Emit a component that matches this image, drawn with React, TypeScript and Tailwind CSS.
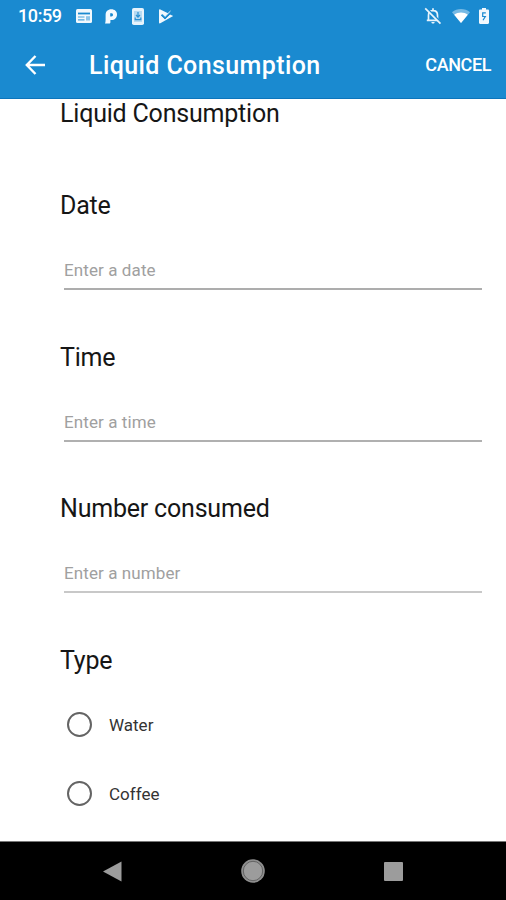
import React from "react";

function NewsIcon() {
  return (
    <svg width="16" height="14" viewBox="0 0 16 14">
      <rect width="16" height="14" rx="1.5" fill="#f1f8fd" />
      <path d="M2 4.500h12" stroke="#1a8ad0" strokeWidth="1.8" />
      <path d="M2 8h6.500M2 10.800h6.500" stroke="#4ba4db" strokeWidth="1.2" />
      <rect x="10" y="7.2" width="4" height="4.3" fill="#8cc4e8" />
    </svg>
  );
}

function PandoraIcon() {
  return (
    <svg width="12" height="15" viewBox="0 0 12 15">
      <path
        fill="#f4faff"
        fillRule="evenodd"
        d="M.6 6C.6 2.500 2.900.3 6.300.3 9.800.3 12 2.500 12 5.500c0 3.300-2.400 5.600-5.500 5.600H5.400v2.100c0 .8-.5 1.300-1.300 1.300H0c.4-1 .6-2 .6-3.500zM5.200 4.200v3.200h1.200c1 0 1.600-.6 1.600-1.600s-.6-1.600-1.600-1.600z"
      />
    </svg>
  );
}

function PhoneDownloadIcon() {
  return (
    <svg width="12" height="17" viewBox="0 0 12 17">
      <rect width="12" height="17" rx="1.8" fill="#e6f3fc" />
      <rect x="2" y="3" width="8" height="11" fill="#b5daf2" />
      <path d="M6 4v5M4 7l2 2.200L8 7M3.200 9.500v2.200h5.600V9.500" fill="none" stroke="#2b91d3" strokeWidth="1.200" />
    </svg>
  );
}

function PlayCheckIcon() {
  return (
    <svg width="15" height="15" viewBox="0 0 15 15">
      <path d="M0 1.200C0 .4.600 0 1.300.4L9.500 4.600 6 8 3.200 5.200 2 6.400 6 10.300 12 4.400 11 5.400 14.200 7 1.300 14.300C.600 14.700 0 14.300 0 13.500z" fill="#f1f8fd" />
      <path d="m2.600 5.800 3.400 3.300 6.200-6.200" fill="none" stroke="#1a8ad0" strokeWidth="1.500" />
      <path d="m4.200 5.200 2 2L11.500 2" fill="none" stroke="#d9edfa" strokeWidth="1" />
    </svg>
  );
}

function BellOffIcon() {
  return (
    <svg width="18" height="18" viewBox="0 0 18 18" fill="none" stroke="#e8f4fc" strokeWidth="1.700">
      <path d="M4.500 13V8.200C4.500 5.500 6.200 3.700 9 3.700s4.500 1.800 4.500 4.500V13M2.800 13.300h12.400M9 1.200v2.500" />
      <path d="M7.400 15h3.200c0 1-.6 1.600-1.600 1.600S7.400 16 7.400 15z" fill="#e8f4fc" stroke="none" />
      <path d="M2.500.800 17.500 15.800" stroke="#1a8ad0" />
      <path d="m1.200 1.300 15.300 15.300" />
    </svg>
  );
}

function WifiIcon() {
  return (
    <svg width="18" height="14" viewBox="0 0 18 14">
      <path d="M0 3.200C5-1 13-1 18 3.200L9 14z" fill="#76b9e4" />
      <path d="M2.200 5.800C6 2.700 12 2.700 15.800 5.800L9 14z" fill="#fff" />
    </svg>
  );
}

function BatteryIcon() {
  return (
    <svg width="10" height="16" viewBox="0 0 10 16">
      <path d="M3 0h4v1.600h1.800c.7 0 1.200.5 1.200 1.200v12c0 .7-.5 1.200-1.200 1.200H1.200C.5 16 0 15.500 0 14.800v-12c0-.7.5-1.200 1.200-1.200H3z" fill="#f1f8fd" />
      <path d="M6.800 4.800H3.700v3.700h2.600L4 12.200" fill="none" stroke="#1a8ad0" strokeWidth="1.200" />
    </svg>
  );
}

function Field({ label, hint, line }: { label: string; hint: string; line: string }) {
  return (
    <section className="h-[151.4px]">
      <h2 className="text-[25px] leading-[30px] tracking-[-0.2px]">{label}</h2>
      <div className={`mt-[29px] ml-1 h-[40px] border-b-2 ${line}`}>
        <span className="block pt-[10px] text-[17px] leading-5 tracking-[0.1px] text-[#a0a0a0]">{hint}</span>
      </div>
    </section>
  );
}

function Choice({ label }: { label: string }) {
  return (
    <label className="flex h-[69px] items-center pl-[7px]">
      <span className="size-[25px] rounded-full border-2 border-[#646464]" />
      <span className="ml-[17px] pt-0.5 text-[17px] leading-5 text-[#333]">{label}</span>
    </label>
  );
}

export default function App() {
  return (
    <div className="flex h-[900px] w-[506px] flex-col overflow-hidden bg-white font-['Roboto',sans-serif] text-[#161616]">
      <header className="h-[99px] shrink-0 border-b border-[#0c75bc] bg-[#1a8ad0] text-white">
        <div className="flex h-8 items-center pr-[17px] pl-[18px]">
          <span className="w-[58px] text-[18px] leading-8 font-medium tracking-[-0.4px]">10:59</span>
          <NewsIcon />
          <span className="ml-[13px]"><PandoraIcon /></span>
          <span className="ml-[15px]"><PhoneDownloadIcon /></span>
          <span className="ml-[15px]"><PlayCheckIcon /></span>
          <span className="ml-auto"><BellOffIcon /></span>
          <span className="ml-[10px]"><WifiIcon /></span>
          <span className="ml-[9px]"><BatteryIcon /></span>
        </div>
        <div className="flex h-[66px] items-center pr-[15px] pl-[25px]">
          <svg width="21" height="20" viewBox="0 0 21 20" fill="none" stroke="#fff" strokeWidth="2.400">
            <path d="M20 10H2M10.500 1 1.800 10l8.700 9" />
          </svg>
          <h1 className="ml-[43px] pt-px text-[25px] leading-[30px] font-medium tracking-[0.4px]">Liquid Consumption</h1>
          <button className="ml-auto text-[18px] leading-6 font-medium tracking-[-0.4px]">CANCEL</button>
        </div>
      </header>
      <main className="h-[742px] shrink-0 overflow-hidden pr-6 pl-[60px]">
        <p className="h-[92.4px] text-[25px] leading-[30px] tracking-[-0.2px]">Liquid Consumption</p>
        <Field label="Date" hint="Enter a date" line="border-[#adadad]" />
        <Field label="Time" hint="Enter a time" line="border-[#b0b0b0]" />
        <Field label="Number consumed" hint="Enter a number" line="border-[#c8c8c8]" />
        <h2 className="text-[25px] leading-[30px] tracking-[-0.2px]">Type</h2>
        <div className="mt-[14.4px]">
          <Choice label="Water" />
          <Choice label="Coffee" />
        </div>
      </main>
      <nav className="flex flex-1 items-center justify-between border-t border-[#777] bg-black pr-[103px] pl-[103px]">
        <svg width="19" height="21" viewBox="0 0 19 21"><path d="M18.500.500v20L0 10.500z" fill="#9c9c9c" /></svg>
        <svg width="24" height="24" viewBox="0 0 24 24">
          <circle cx="12" cy="12" r="11.800" fill="#8f8f8f" />
          <circle cx="12" cy="12" r="9.700" fill="#9c9c9c" stroke="#555" strokeWidth=".8" />
        </svg>
        <span className="size-[19px] rounded-[1px] bg-[#9c9c9c]" />
      </nav>
    </div>
  );
}
